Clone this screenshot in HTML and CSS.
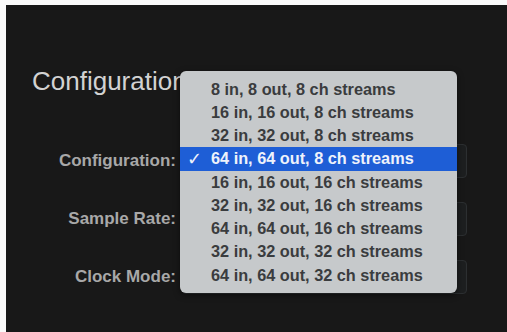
FILE: index.html
```html
<!DOCTYPE html>
<html>
<head>
<meta charset="utf-8">
<link rel="stylesheet" href="styles.css">
</head>
<body>
<div class="panel">
  <h1 class="title">Configuration</h1>
  <div class="form">
    <div class="label">Configuration:</div>
    <div class="popup"></div>
    <div class="label">Sample Rate:</div>
    <div class="popup"></div>
    <div class="label">Clock Mode:</div>
    <div class="popup"></div>
  </div>
  <ul class="menu">
    <li class="item">8 in, 8 out, 8 ch streams</li>
    <li class="item">16 in, 16 out, 8 ch streams</li>
    <li class="item">32 in, 32 out, 8 ch streams</li>
    <li class="item selected"><span class="check">✓</span>64 in, 64 out, 8 ch streams</li>
    <li class="item">16 in, 16 out, 16 ch streams</li>
    <li class="item">32 in, 32 out, 16 ch streams</li>
    <li class="item">64 in, 64 out, 16 ch streams</li>
    <li class="item">32 in, 32 out, 32 ch streams</li>
    <li class="item">64 in, 64 out, 32 ch streams</li>
  </ul>
</div>
</body>
</html>
```
FILE: styles.css
```css
html, body {
  margin: 0;
  padding: 0;
  background: #fafafa;
  height: 100%;
  overflow: hidden;
}
.panel {
  position: relative;
  margin: 5px 0 0 6px;
  height: 327px;
  background: #181818;
  padding: 61px 0 0 26px;
  box-sizing: border-box;
  font-family: "Liberation Sans", Arial, sans-serif;
}
.title {
  margin: 0;
  font-size: 26px;
  line-height: 30px;
  font-weight: normal;
  color: #d2d2d2;
}
.form {
  margin-top: 48px;
  display: grid;
  grid-template-columns: 144px 285px;
  grid-auto-rows: 34px;
  column-gap: 6px;
  row-gap: 24px;
  align-items: center;
}
.label {
  text-align: right;
  font-size: 17px;
  font-weight: bold;
  color: #a8a8a8;
}
.popup {
  height: 34px;
  box-sizing: border-box;
  background: #1d1f20;
  border: 1px solid #2c2f31;
  border-radius: 4px;
}
.menu {
  position: absolute;
  left: 174px;
  top: 66px;
  width: 277px;
  height: 222px;
  margin: 0;
  padding: 6.5px 0 0 0;
  box-sizing: border-box;
  list-style: none;
  background: #c6c9cb;
  border-radius: 6px;
  box-shadow: 0 2px 6px rgba(0,0,0,0.5);
}
.item {
  position: relative;
  height: 23.25px;
  line-height: 23.25px;
  padding-left: 31px;
  font-size: 16.3px;
  font-weight: bold;
  color: #3a3c3e;
  white-space: nowrap;
}
.item.selected {
  background: #1e5ed6;
  color: #eef2fb;
}
.check {
  position: absolute;
  left: 7px;
  top: 0;
  font-family: "DejaVu Sans", sans-serif;
  font-size: 18px;
  font-weight: bold;
}
```
